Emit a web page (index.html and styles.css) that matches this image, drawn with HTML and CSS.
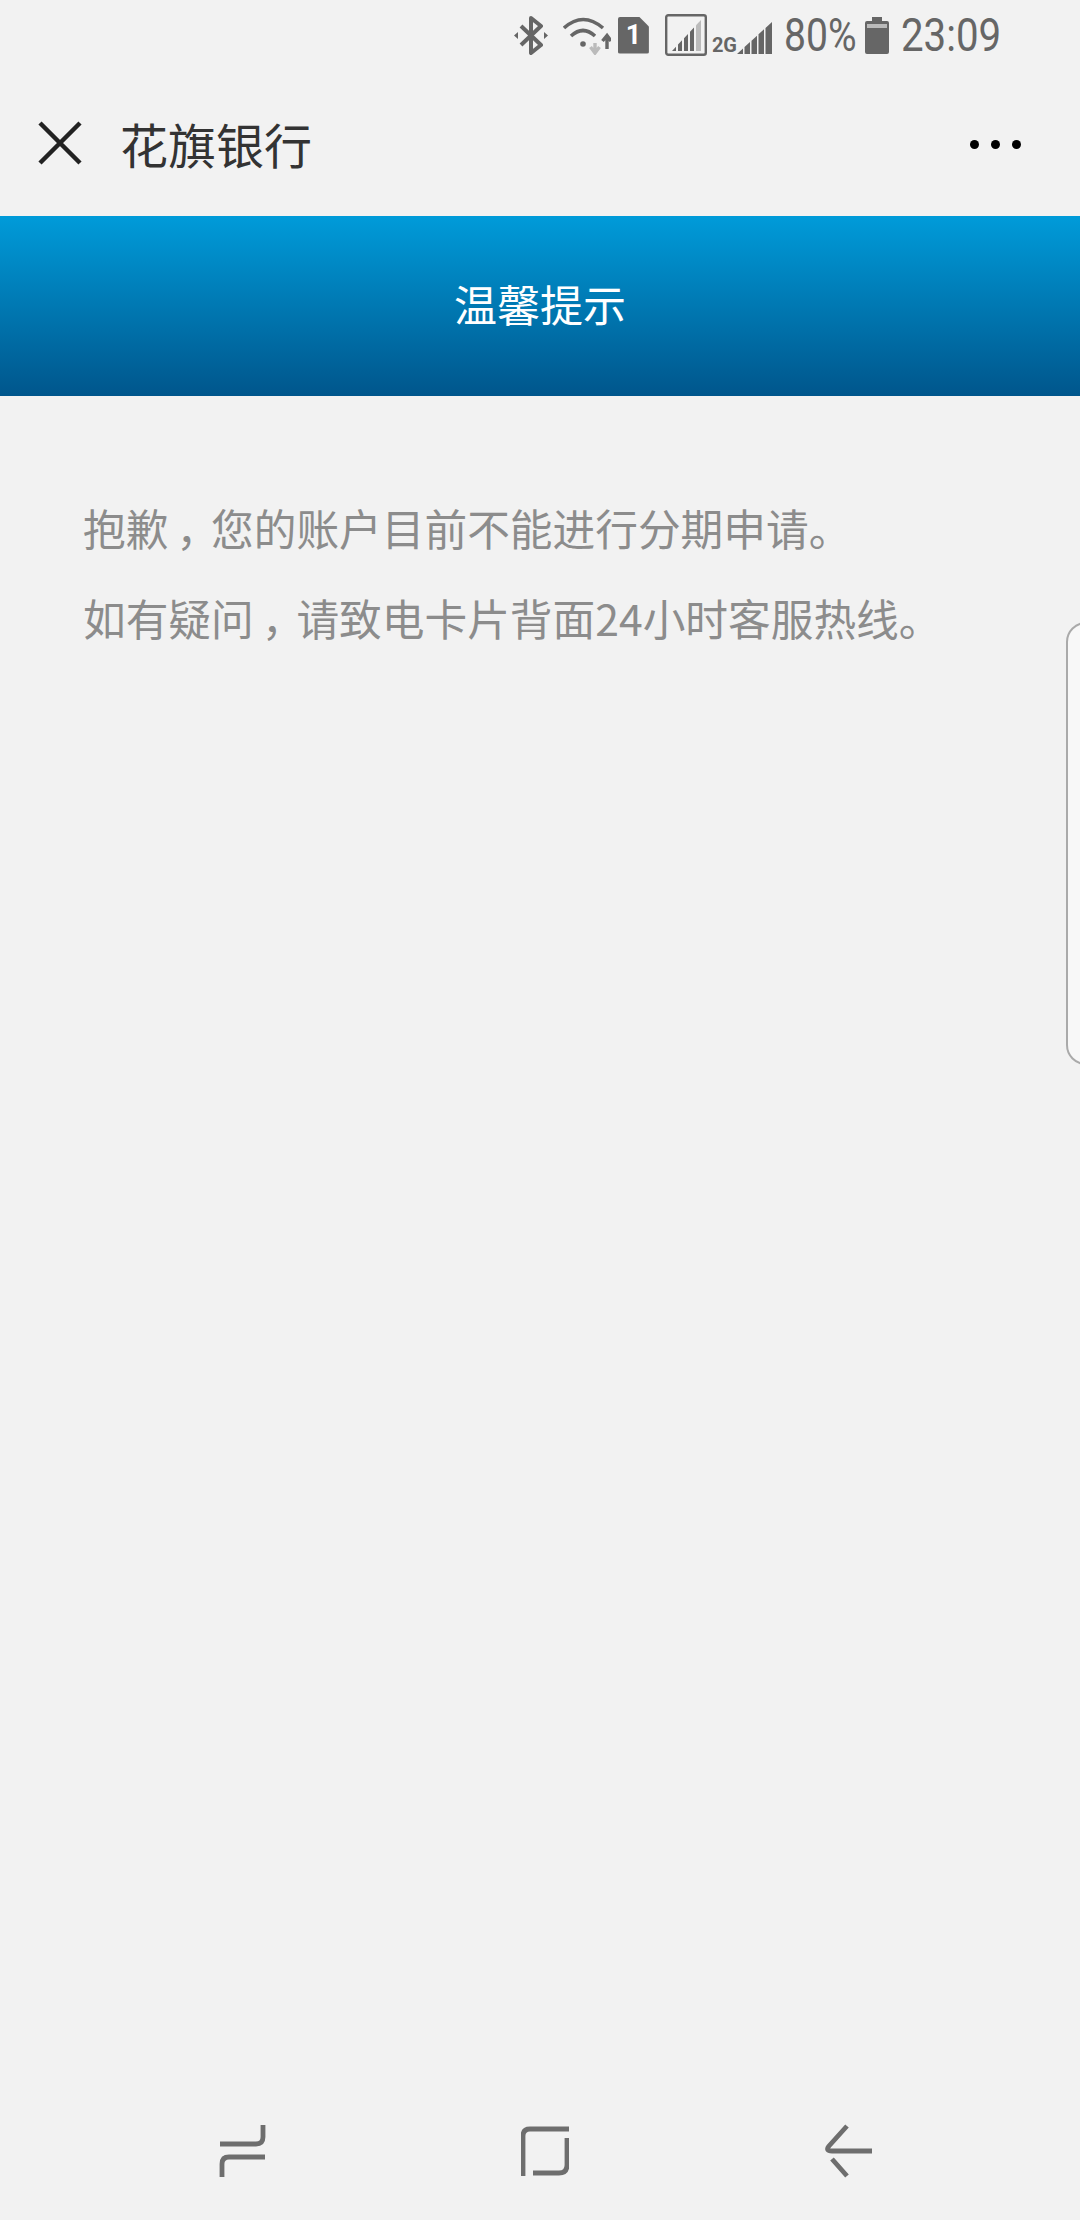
FILE: index.html
```html
<!DOCTYPE html>
<html lang="zh-CN">
<head>
<meta charset="UTF-8">
<title>花旗银行</title>
<link rel="stylesheet" href="styles.css">
</head>
<body>
<div class="page">
    <div class="statusbar">
        <svg class="st-bt" width="34" height="39" viewBox="0 0 34 39">
            <path d="M7 10 L27 29 L17 37 V2 L27 10 L7 29" fill="none" stroke="#666" stroke-width="4" stroke-linejoin="round"/>
            <path d="M0 19.500 L4 16 V23 Z M34 19.500 L30 16 V23 Z" fill="#666"/>
        </svg>
        <svg class="st-wifi" width="48" height="39" viewBox="0 0 48 39">
            <path d="M1 12 Q20 -5 40 12 M8 20 Q20 9 32 20" fill="none" stroke="#666" stroke-width="3.600"/>
            <circle cx="20" cy="28" r="2.800" fill="#666"/>
            <path d="M32 27 V34 M27.500 31 L32 37 L36.500 31" fill="none" stroke="#bbb" stroke-width="3.400"/>
            <path d="M44 33 V22 M39.500 25 L44 19.500 L48 25" fill="none" stroke="#666" stroke-width="3.400"/>
        </svg>
        <div class="st-sim">1</div>
        <svg class="st-box" width="42" height="42" viewBox="0 0 42 42">
            <rect x="1.200" y="1.200" width="39.600" height="39.600" rx="2" fill="none" stroke="#666" stroke-width="2.400"/>
            <path d="M7 37 L11 32.700 V37 Z M13 37 V30.600 L17 26.300 V37 Z M19 37 V24.200 L23 19.900 V37 Z M25 37 V17.800 L29 13.500 V37 Z" fill="#666"/>
            <path d="M31 37 V11.300 L36 6 V37 Z" fill="#bbb"/>
        </svg>
        <div class="st-net">
            <span class="net-2g">2G</span>
            <svg width="35" height="32" viewBox="24 0 35 32">
                <path d="M24 32 L30 26.500 V32 Z M31.500 32 V25.100 L37 20.100 V32 Z M38.500 32 V18.700 L44 13.700 V32 Z M45.500 32 V12.300 L51 7.300 V32 Z M52.500 32 V5.900 L59 0 V32 Z" fill="#666"/>
            </svg>
        </div>
        <span class="st-text st-pct">80%</span>
        <svg class="st-batt" width="24" height="37" viewBox="0 0 24 37">
            <path d="M7 0 H17 V4 H22 Q24 4 24 6 V35 Q24 37 22 37 H2 Q0 37 0 35 V6 Q0 4 2 4 H7 Z" fill="#666"/>
            <rect x="2" y="7" width="20" height="4" fill="#bbb"/>
        </svg>
        <span class="st-text st-time">23:09</span>
    </div>

    <div class="topbar">
        <svg class="close" width="44" height="44" viewBox="0 0 44 44">
            <path d="M2 2 L42 42 M42 2 L2 42" stroke="#222" stroke-width="4.500"/>
        </svg>
        <div class="title">花旗银行</div>
        <div class="dots"><i></i><i></i><i></i></div>
    </div>

    <div class="banner">温馨提示</div>

    <div class="content">
        <p>抱歉<span class="comma">，</span>您的账户目前不能进行分期申请。</p>
        <p>如有疑问<span class="comma">，</span>请致电卡片背面24小时客服热线。</p>
    </div>

    <div class="navbar">
        <svg width="48" height="56" viewBox="0 0 48 56">
            <path d="M2 21 H38 Q45 21 45 14 V2 M47 34 H11 Q4 34 4 41 V54" fill="none" stroke="#6e6e6e" stroke-width="4.800"/>
        </svg>
        <svg width="48" height="56" viewBox="0 0 48 56">
            <path d="M48 6 H9 Q2 6 2 13 V53 M46 15 V42 Q46 50 38 50 H12" fill="none" stroke="#6e6e6e" stroke-width="4.800"/>
        </svg>
        <svg width="48" height="56" viewBox="0 0 48 56">
            <path d="M23 3 L5 23 Q1 28 8 28 H48 M8 36 L23 53" fill="none" stroke="#6e6e6e" stroke-width="4.800"/>
        </svg>
    </div>

    <div class="edge-handle"></div>
</div>
</body>
</html>
```

FILE: styles.css
```css
* {
    box-sizing: border-box;
}
body {
    margin: 0;
    background: #f2f2f2;
    font-family: "Noto Sans CJK SC", "Noto Sans", sans-serif;
}
.page {
    position: relative;
    display: flex;
    flex-direction: column;
    width: 1080px;
    height: 2220px;
    overflow: hidden;
}

/* status bar */
.statusbar {
    display: flex;
    align-items: center;
    justify-content: flex-end;
    height: 70px;
    padding-right: 81px;
    flex-shrink: 0;
}
.st-wifi { margin-left: 15px; }
.st-box { margin-left: 16px; }
.st-pct { margin-left: 12px; width: 71px; transform: scaleX(0.85); }
.st-batt { margin-left: 10px; }
.st-time { margin-left: 12px; width: 98px; transform: scaleX(0.875); }
.st-text {
    display: block;
    font-family: Roboto, sans-serif;
    font-size: 46px;
    line-height: 70px;
    color: #666;
    white-space: nowrap;
    transform-origin: left center;
}
.st-sim {
    width: 31px;
    height: 37px;
    margin-left: 7px;
    font-family: Roboto, sans-serif;
    font-size: 27px;
    font-weight: 700;
    line-height: 37px;
    text-align: center;
    color: #fff;
    background: #666;
    border-radius: 2px;
    clip-path: polygon(0 0, 68% 0, 100% 27%, 100% 100%, 0 100%);
}
.st-net {
    display: flex;
    align-items: flex-end;
    margin-left: 5px;
    padding-top: 6px;
}
.net-2g {
    font-family: Roboto, sans-serif;
    font-size: 20px;
    font-weight: 700;
    line-height: 18px;
    color: #666;
}

/* title row */
.topbar {
    display: flex;
    align-items: center;
    height: 146px;
    padding-left: 38px;
    flex-shrink: 0;
}
.title {
    margin-left: 38px;
    font-size: 48px;
    line-height: 60px;
    color: #333;
}
.dots {
    display: flex;
    gap: 12px;
    margin-left: auto;
    margin-top: 3px;
    padding-right: 59px;
}
.dots i {
    display: block;
    width: 9px;
    height: 9px;
    border-radius: 50%;
    background: #000;
}

.banner {
    height: 180px;
    line-height: 174px;
    text-align: center;
    font-size: 43px;
    color: #fff;
    background: linear-gradient(180deg, #009bd9, #00568c);
    flex-shrink: 0;
}

.content {
    flex: 1;
    padding: 86px 0 0 83px;
}
.content p {
    margin: 0;
    font-size: 42.700px;
    line-height: 90px;
    color: #8c8c8c;
    white-space: nowrap;
}
.comma {
    display: inline-block;
    width: 1em;
    text-align: center;
    font-feature-settings: "palt";
}

.navbar {
    display: flex;
    gap: 255px;
    padding: 0 0 41px 218px;
    flex-shrink: 0;
}

.edge-handle {
    position: absolute;
    top: 622px;
    left: 1066px;
    width: 40px;
    height: 443px;
    border: 2px solid #aaa;
    border-radius: 22px;
    background: #f8f8f8;
}
```
